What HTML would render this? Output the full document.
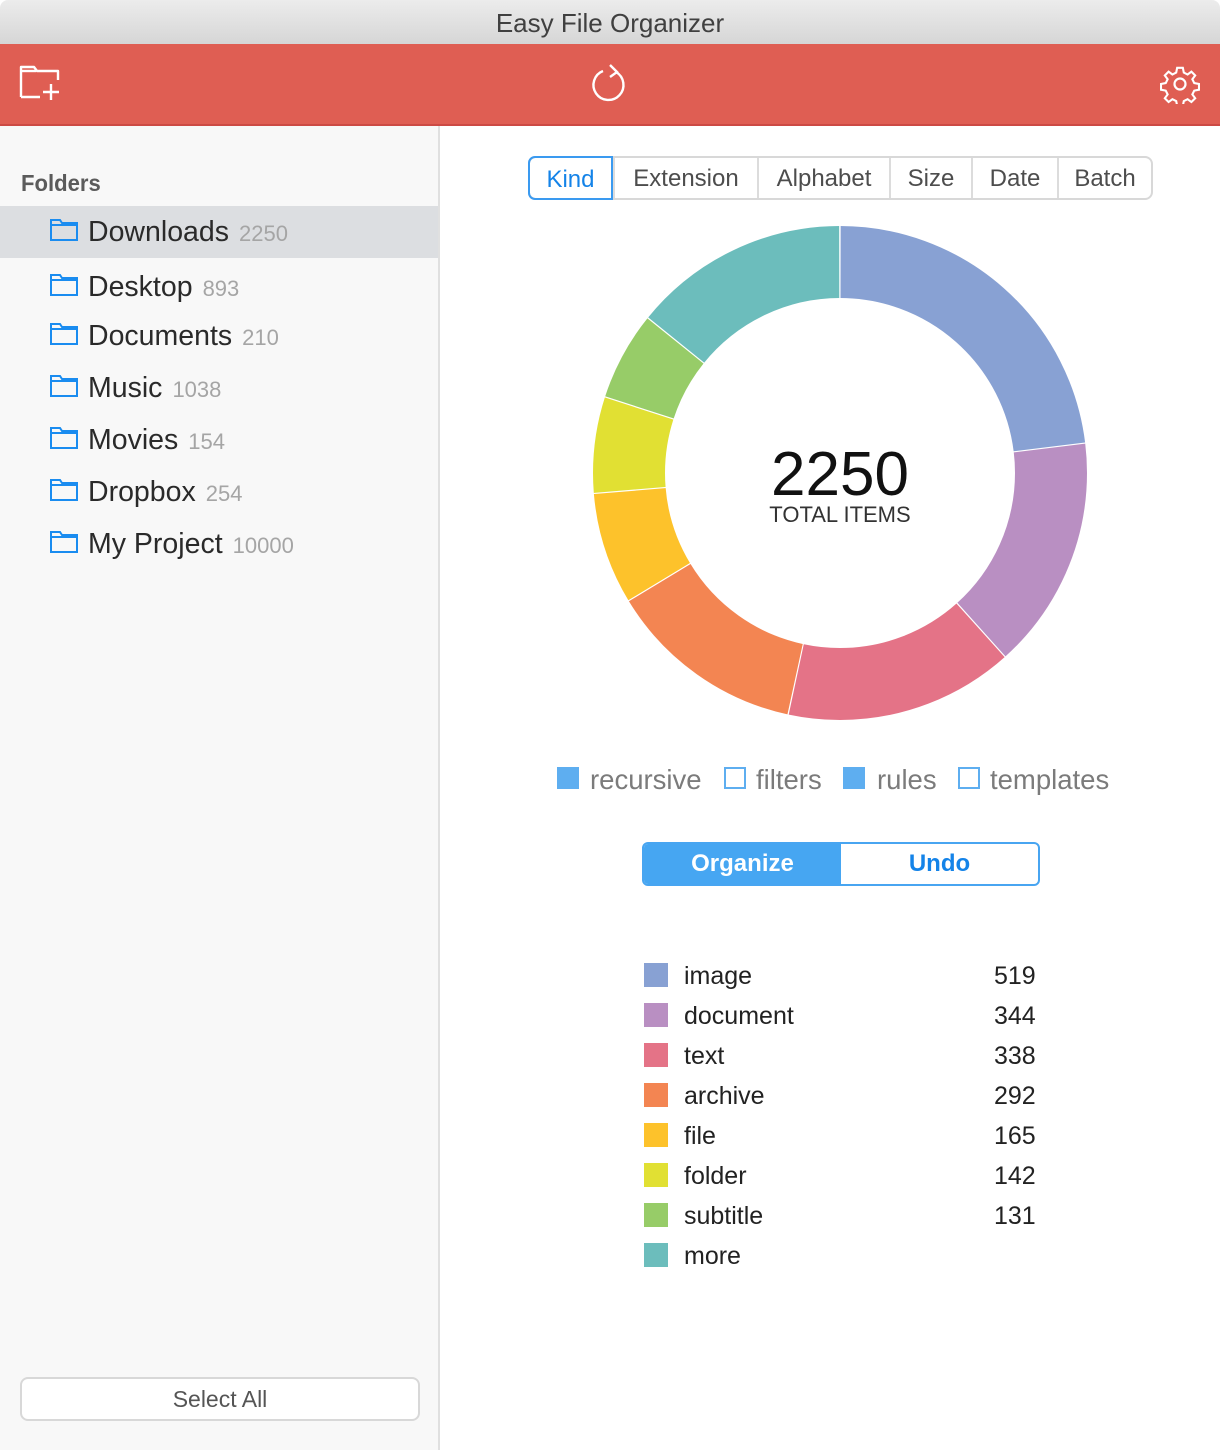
<!DOCTYPE html>
<html><head><meta charset="utf-8"><style>
*{margin:0;padding:0;box-sizing:border-box}
body{width:1220px;height:1450px;background:#fff;font-family:"Liberation Sans",Helvetica,Arial,sans-serif;position:relative;overflow:hidden}
.title{position:absolute;left:0;top:0;width:1220px;height:44px;background:linear-gradient(#ececec,#d6d6d6);border-radius:8px 8px 0 0;text-align:center;line-height:46px;font-size:26px;color:#404040}
.bar{position:absolute;left:0;top:44px;width:1220px;height:82px;background:#df5e53;border-bottom:2px solid #cc4a44}
.side{position:absolute;left:0;top:126px;width:440px;height:1324px;background:#f8f8f8;border-right:2px solid #e0e0e0}
.fh{position:absolute;left:21px;top:44px;font-size:23px;color:#5b5b5b;font-weight:bold;transform:scaleX(.96);transform-origin:left}
.sel{position:absolute;left:0;top:80px;width:438px;height:52px;background:#dcdee1}
.row{position:absolute;left:50px;font-size:28.5px;color:#2a2a2a;white-space:nowrap;height:32px;line-height:32px}
.row svg{position:absolute;left:0;top:2px}
.row .c{font-size:22px;color:#a5a5a5;margin-left:10px}
.sa{position:absolute;left:20px;top:1377px;width:400px;height:44px;border:2px solid #d8d8d8;border-radius:8px;background:#fff;text-align:center;line-height:41px;font-size:23px;color:#555}
.tabs{position:absolute;left:528px;top:156px;height:44px;display:flex;border:2px solid #d8d8d8;border-radius:8px;background:#fff;font-size:24px;color:#4d4d4d}
.tabs div{height:40px;line-height:41px;text-align:center;border-left:2px solid #dcdcdc}
.tabs div:first-child{border:2px solid #3a9af0;border-radius:7px 0 0 7px;color:#1483e8;margin:-2px 0 -2px -2px;height:44px;line-height:43px}
.opt{position:absolute;top:764px;font-size:27.5px;color:#7b7b7b}
.box{position:absolute;top:767px;width:22px;height:22px;border:2px solid #5eaef0}
.box.f{background:#5eaef0}
.btns{position:absolute;left:642px;top:842px;width:398px;height:44px;border:2px solid #48a5f1;border-radius:6px;overflow:hidden;display:flex;font-size:24px;font-weight:bold}
.btns div{flex:1;text-align:center;line-height:40px}
.leg{position:absolute;left:644px;font-size:25px;color:#222}
.leg i{position:absolute;left:0;top:1px;width:24px;height:24px}
.leg span{position:absolute;left:40px;white-space:nowrap}
.leg b{position:absolute;left:350px;font-weight:normal}
</style></head><body>
<div class="title">Easy File Organizer</div>
<div class="bar">
<svg style="position:absolute;left:18px;top:20px" width="46" height="38" viewBox="0 0 46 38" fill="none" stroke="#fff" stroke-width="2.4" stroke-linejoin="round"><path d="M3 33V3h13l3 4h21v9"/><path d="M3 33h19"/><path d="M3 7h15"/><path d="M33 20v16M25 28h16"/></svg>
<svg style="position:absolute;left:590px;top:18px" width="40" height="42" viewBox="0 0 40 42" fill="none" stroke="#fff" stroke-width="2.4"><path d="M26 10A15 15 0 1 1 13 9"/><path d="M20 3l7 7-7 5"/></svg>
<svg style="position:absolute;left:1160px;top:20px" width="40" height="40" viewBox="-20 -20 40 40" fill="none" stroke="#fff" stroke-width="2.2"><path d="M-3-17h6l1 5 4 2 4-3 4 4-3 4 2 4 5 1v6l-5 1-2 4 3 4-4 4-4-3-4 2-1 5h-6l-1-5-4-2-4 3-4-4 3-4-2-4-5-1v-6l5-1 2-4-3-4 4-4 4 3 4-2z" transform="scale(.95)"/><circle r="5.5"/></svg>
</div>
<div class="side">
<div class="fh">Folders</div>
<div class="sel"></div>
</div>
<div class="row" style="top:216px"><svg width="28" height="24" viewBox="0 0 28 24" fill="none" stroke="#1a8cf0" stroke-width="2"><path d="M1 22V2h9l2 3h15v17z M1 7h26"/></svg><span style="margin-left:38px">Downloads</span><span class="c">2250</span></div>
<div class="row" style="top:271px"><svg width="28" height="24" viewBox="0 0 28 24" fill="none" stroke="#1a8cf0" stroke-width="2"><path d="M1 22V2h9l2 3h15v17z M1 7h26"/></svg><span style="margin-left:38px">Desktop</span><span class="c">893</span></div>
<div class="row" style="top:320px"><svg width="28" height="24" viewBox="0 0 28 24" fill="none" stroke="#1a8cf0" stroke-width="2"><path d="M1 22V2h9l2 3h15v17z M1 7h26"/></svg><span style="margin-left:38px">Documents</span><span class="c">210</span></div>
<div class="row" style="top:372px"><svg width="28" height="24" viewBox="0 0 28 24" fill="none" stroke="#1a8cf0" stroke-width="2"><path d="M1 22V2h9l2 3h15v17z M1 7h26"/></svg><span style="margin-left:38px">Music</span><span class="c">1038</span></div>
<div class="row" style="top:424px"><svg width="28" height="24" viewBox="0 0 28 24" fill="none" stroke="#1a8cf0" stroke-width="2"><path d="M1 22V2h9l2 3h15v17z M1 7h26"/></svg><span style="margin-left:38px">Movies</span><span class="c">154</span></div>
<div class="row" style="top:476px"><svg width="28" height="24" viewBox="0 0 28 24" fill="none" stroke="#1a8cf0" stroke-width="2"><path d="M1 22V2h9l2 3h15v17z M1 7h26"/></svg><span style="margin-left:38px">Dropbox</span><span class="c">254</span></div>
<div class="row" style="top:528px"><svg width="28" height="24" viewBox="0 0 28 24" fill="none" stroke="#1a8cf0" stroke-width="2"><path d="M1 22V2h9l2 3h15v17z M1 7h26"/></svg><span style="margin-left:38px">My Project</span><span class="c">10000</span></div>
<div class="sa">Select All</div>

<div class="tabs"><div style="width:85px">Kind</div><div style="width:144px">Extension</div><div style="width:132px">Alphabet</div><div style="width:82px">Size</div><div style="width:86px">Date</div><div style="width:94px">Batch</div></div>

<svg style="position:absolute;left:0;top:0" width="1220" height="1450">
<g transform="translate(840 473) rotate(-90)" fill="none" stroke-width="72">
<circle r="211" pathLength="2250" stroke="#88a1d3" stroke-dasharray="519 2250" stroke-dashoffset="0"/>
<circle r="211" pathLength="2250" stroke="#b98fc2" stroke-dasharray="344 2250" stroke-dashoffset="-519"/>
<circle r="211" pathLength="2250" stroke="#e47387" stroke-dasharray="338 2250" stroke-dashoffset="-863"/>
<circle r="211" pathLength="2250" stroke="#f38552" stroke-dasharray="292 2250" stroke-dashoffset="-1201"/>
<circle r="211" pathLength="2250" stroke="#fdc22b" stroke-dasharray="165 2250" stroke-dashoffset="-1493"/>
<circle r="211" pathLength="2250" stroke="#e1e033" stroke-dasharray="142 2250" stroke-dashoffset="-1658"/>
<circle r="211" pathLength="2250" stroke="#97cc68" stroke-dasharray="131 2250" stroke-dashoffset="-1800"/>
<circle r="211" pathLength="2250" stroke="#6cbdbc" stroke-dasharray="319 2250" stroke-dashoffset="-1931"/>
<circle r="211" pathLength="2250" stroke="#fff" stroke-width="74" stroke-dasharray="2 517 2 342 2 336 2 290 2 163 2 140 2 129 2 317" stroke-dashoffset="1"/>
</g>
<text x="840" y="495" text-anchor="middle" font-family="Liberation Sans" font-size="62" fill="#111">2250</text>
<text x="840" y="522" text-anchor="middle" font-family="Liberation Sans" font-size="22" fill="#333">TOTAL ITEMS</text>
</svg>

<div class="box f" style="left:557px"></div><div class="opt" style="left:590px">recursive</div>
<div class="box" style="left:724px"></div><div class="opt" style="left:756px">filters</div>
<div class="box f" style="left:843px"></div><div class="opt" style="left:877px">rules</div>
<div class="box" style="left:958px"></div><div class="opt" style="left:990px">templates</div>

<div class="btns"><div style="background:#46a6f2;color:#fff">Organize</div><div style="color:#1483e8">Undo</div></div>

<div class="leg" style="top:962px"><i style="background:#88a1d3"></i><span>image</span><b>519</b></div>
<div class="leg" style="top:1002px"><i style="background:#b98fc2"></i><span>document</span><b>344</b></div>
<div class="leg" style="top:1042px"><i style="background:#e47387"></i><span>text</span><b>338</b></div>
<div class="leg" style="top:1082px"><i style="background:#f38552"></i><span>archive</span><b>292</b></div>
<div class="leg" style="top:1122px"><i style="background:#fdc22b"></i><span>file</span><b>165</b></div>
<div class="leg" style="top:1162px"><i style="background:#e1e033"></i><span>folder</span><b>142</b></div>
<div class="leg" style="top:1202px"><i style="background:#97cc68"></i><span>subtitle</span><b>131</b></div>
<div class="leg" style="top:1242px"><i style="background:#6cbdbc"></i><span>more</span></div>
</body></html>
